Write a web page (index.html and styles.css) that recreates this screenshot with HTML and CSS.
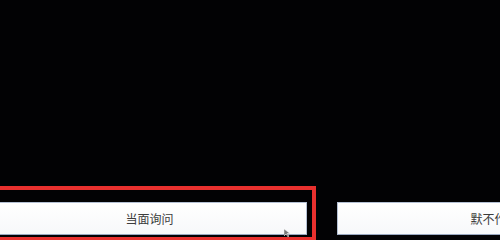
FILE: index.html
```html
<!DOCTYPE html>
<html lang="zh">
<head>
<meta charset="utf-8">
<link rel="stylesheet" href="styles.css">
</head>
<body>
<div class="screen">
  <div class="row">
    <div class="highlight">
      <button class="btn">当面询问
        <svg class="cursor" width="6" height="8" viewBox="0 0 6 8"><path d="M0 0 L0 7 L2 5 L4 8 L5 7 L3 4.5 L6 4.5 Z" fill="#777" stroke="#eee" stroke-width="0.5"/></svg>
      </button>
    </div>
    <button class="btn btn-right">默不作声</button>
  </div>
</div>
</body>
</html>
```
FILE: styles.css
```css
html, body {
  margin: 0;
  padding: 0;
  background: #000;
}
.screen {
  width: 500px;
  height: 240px;
  background: #020204;
  display: flex;
  flex-direction: column;
  justify-content: flex-end;
  overflow: hidden;
}
.row {
  display: flex;
  align-items: flex-start;
  margin-left: -12px;
  margin-bottom: -1px;
  flex-shrink: 0;
}
.highlight {
  border: 4px solid #e8302e;
  padding: 12px 5px 2px 0;
  flex-shrink: 0;
}
.btn {
  position: relative;
  display: block;
  box-sizing: border-box;
  width: 315px;
  height: 33px;
  margin: 0;
  padding: 0;
  flex-shrink: 0;
  background: linear-gradient(#ffffff, #f7f8fa);
  border: 1px solid #b4c0d4;
  border-bottom-color: #9aa8c0;
  color: #3c3c3c;
  font-family: "Noto Sans CJK SC", "Noto Sans", sans-serif;
  font-size: 12px;
  line-height: 31px;
  text-align: center;
}
.btn-right {
  margin-left: 21px;
  margin-top: 16px;
}
.cursor {
  position: absolute;
  left: 291px;
  top: 26px;
}
```
